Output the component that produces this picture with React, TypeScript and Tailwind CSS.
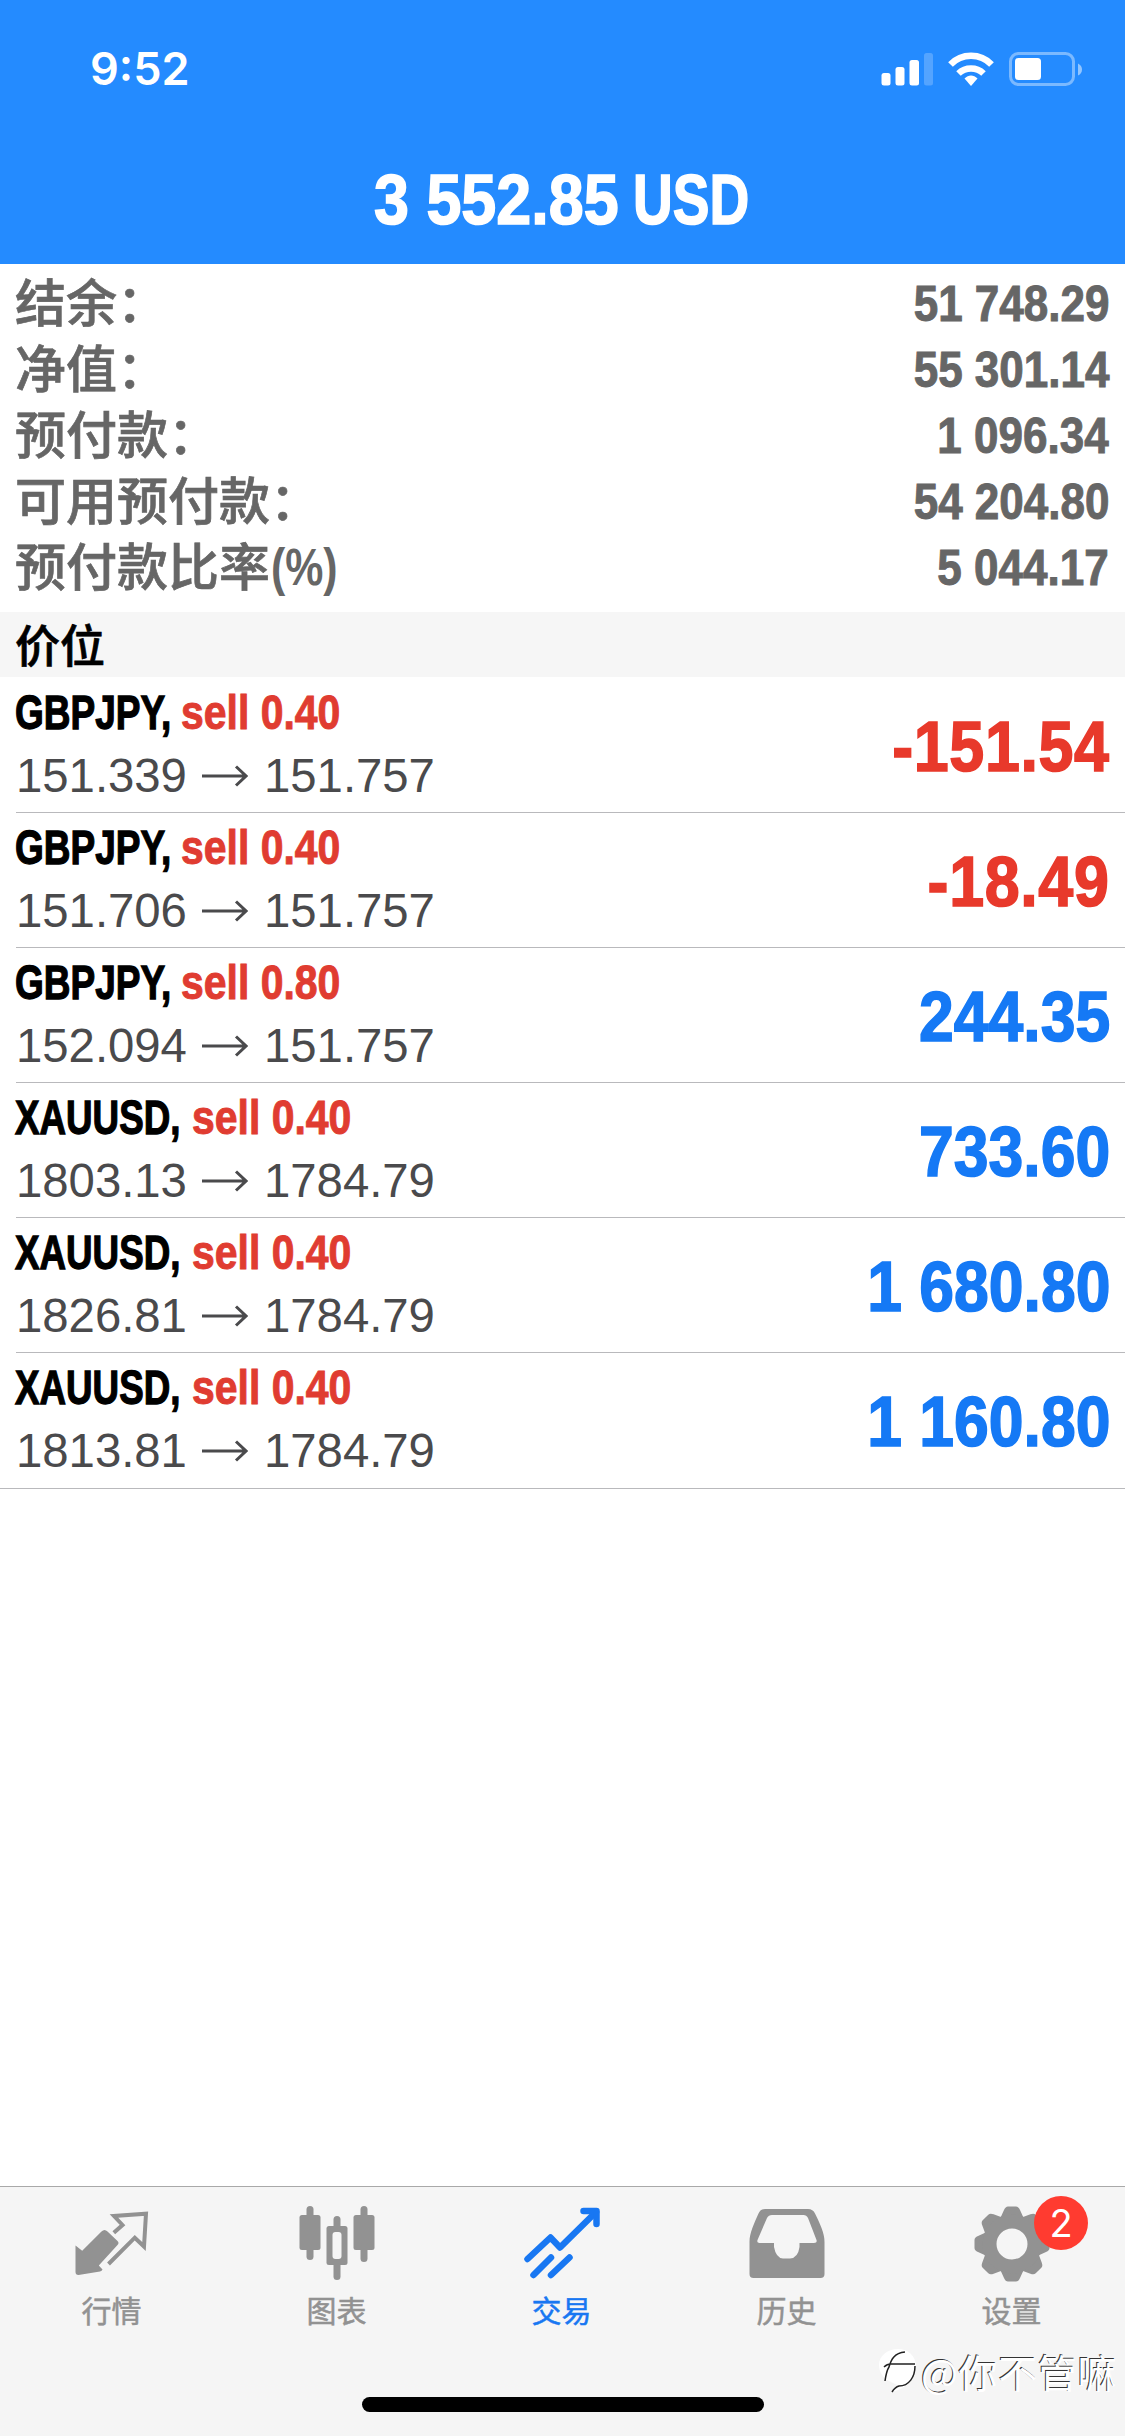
import type { ReactNode } from 'react';
import clsx from 'clsx';

type Position = {
  symbol: string;
  volume: string;
  open: string;
  current: string;
  profit: string;
};

const SUMMARY = [
  { label: '结余：', value: '51 748.29' },
  { label: '净值：', value: '55 301.14' },
  { label: '预付款：', value: '1 096.34' },
  { label: '可用预付款：', value: '54 204.80' },
  { label: '预付款比率', suffix: '(%)', value: '5 044.17' },
];

const POSITIONS: Position[] = [
  { symbol: 'GBPJPY', volume: '0.40', open: '151.339', current: '151.757', profit: '-151.54' },
  { symbol: 'GBPJPY', volume: '0.40', open: '151.706', current: '151.757', profit: '-18.49' },
  { symbol: 'GBPJPY', volume: '0.80', open: '152.094', current: '151.757', profit: '244.35' },
  { symbol: 'XAUUSD', volume: '0.40', open: '1803.13', current: '1784.79', profit: '733.60' },
  { symbol: 'XAUUSD', volume: '0.40', open: '1826.81', current: '1784.79', profit: '1 680.80' },
  { symbol: 'XAUUSD', volume: '0.40', open: '1813.81', current: '1784.79', profit: '1 160.80' },
];

function StatusIcons() {
  return (
    <svg width="204" height="40" viewBox="880 49 204 40" fill="#fff">
      <rect x="881.5" y="73" width="9" height="12.5" rx="2.5" />
      <rect x="895.5" y="67" width="9" height="18.5" rx="2.5" />
      <rect x="909.5" y="60" width="9.5" height="25.5" rx="2.5" />
      <rect x="924" y="53" width="9" height="32.5" rx="2.5" opacity=".22" />
      <g fill="none" stroke="#fff" strokeWidth="6.5">
        <path d="M950.5 64.5a28.500 28.500 0 0 1 41 0" />
        <path d="M958.5 73.500a18 18 0 0 1 25 0" />
      </g>
      <path d="M971 86l-6.500-7.500c4-4 9-4 13 0z" />
      <rect x="1010.5" y="53.5" width="63" height="31" rx="8" fill="none" stroke="#fff" strokeWidth="3" opacity=".4" />
      <rect x="1015" y="58" width="26" height="22" rx="3.5" />
      <path d="M1078 63.500q4 2 4 6t-4 6z" opacity=".5" />
    </svg>
  );
}

function QuotesIcon() {
  return (
    <svg width="76" height="76" viewBox="0 0 76 76">
      <path
        d="M1.500 39.500L8.200 44.700L27.500 25.500Q30.500 22.500 33.500 25.500L43.500 35Q45.500 37 43.500 39L24.800 59.500L28.500 63.500Q28 65 26 65.500L4.500 69Q1.500 69 1.500 66z"
        fill="#929292"
      />
      <path d="M39.800 26.700L48.500 19L40 10L72 7.700L70 40.500L60.800 31.700L34.500 58" fill="none" stroke="#929292" strokeWidth="4" />
    </svg>
  );
}

function ChartIcon() {
  return (
    <svg width="76" height="76" viewBox="0 0 76 76" fill="#929292">
      <rect x="7.5" y="0" width="7" height="54" rx="3.5" />
      <rect x="0.5" y="9" width="21" height="35" rx="2.5" />
      <rect x="34.5" y="10" width="7" height="64" rx="3.5" />
      <rect x="27.5" y="20" width="21" height="39" rx="2.5" />
      <rect x="33.5" y="26" width="9" height="27" rx="3" fill="#f5f5f5" />
      <rect x="61.5" y="0" width="7" height="56" rx="3.5" />
      <rect x="54.5" y="9" width="21" height="35" rx="2.5" />
    </svg>
  );
}

function TradeIcon() {
  return (
    <svg width="76" height="76" viewBox="0 0 76 76" fill="none" stroke="#1877f2" strokeWidth="6.5" strokeLinecap="round" strokeLinejoin="round">
      <path d="M3.500 53L26.500 31.500L36 41.500L72 6" />
      <path d="M59.500 5H72.500V18" />
      <path d="M9.500 69L27 51.500M27 69L45.500 51.500" />
    </svg>
  );
}

function HistoryIcon() {
  return (
    <svg width="76" height="76" viewBox="0 0 76 76">
      <path
        fillRule="evenodd"
        fill="#929292"
        d="M16 3H59Q64 3 66 7.500C71 18 75.500 27 75.500 36V68Q75.500 72 71.500 72H4.500Q.5 72 .5 68V36C.5 27 5 18 9.500 7.500Q11.500 3 16 3zM23 9Q19.500 9 18 12L8.500 34Q7.500 37 10.500 37H25V41Q27 52 34 52.500H41Q49 52 50.500 41V37H65Q68.500 37 67.500 34L59 12Q57.500 9 54.500 9z"
      />
    </svg>
  );
}

function SettingsIcon() {
  const teeth = [0, 45, 90, 135, 180, 225, 270, 315];
  return (
    <svg width="76" height="76" viewBox="0 0 76 76" fill="#929292">
      {teeth.map((angle) => (
        <path key={angle} d="M25 15L30 4Q31.500 .5 34 .5H42Q44.500 .5 46 4L51 15z" transform={`rotate(${angle} 38 38)`} />
      ))}
      <circle cx="38" cy="38" r="22.5" fill="none" stroke="#929292" strokeWidth="14" />
    </svg>
  );
}

const TABS: { label: string; icon: ReactNode; active?: boolean; badge?: string }[] = [
  { label: '行情', icon: <QuotesIcon /> },
  { label: '图表', icon: <ChartIcon /> },
  { label: '交易', icon: <TradeIcon />, active: true },
  { label: '历史', icon: <HistoryIcon /> },
  { label: '设置', icon: <SettingsIcon />, badge: '2' },
];

function PositionRow({ position, last }: { position: Position; last: boolean }) {
  const { symbol, volume, open, current, profit } = position;
  const gold = symbol === 'XAUUSD';
  const loss = profit.startsWith('-');
  return (
    <li className={clsx('flex border-b border-[#b9b9bc]', last ? 'h-[136px] pl-4' : 'ml-4 h-[135px]')}>
      <div className="flex-1 pt-[6px]">
        <div className="flex h-[56px] text-[49px] leading-[56px] font-bold whitespace-nowrap">
          <span className={clsx('-ml-px [-webkit-text-stroke:1.3px_currentColor]', gold ? 'w-[177px]' : 'w-[166px]')}>
            <span className={clsx('inline-block origin-left text-black', gold ? 'scale-x-[0.75]' : 'scale-x-[0.755]')}>{symbol},</span>
          </span>
          <span className="inline-block origin-left scale-x-[0.835] text-[#e03c31] [-webkit-text-stroke:1px_currentColor]">sell {volume}</span>
        </div>
        <div className="flex h-[71px] items-center text-[48px] leading-[71px] whitespace-nowrap text-[#4a4a4c]">
          <span className="w-[186px]">
            <span className="inline-block origin-left scale-x-[0.985]">{open}</span>
          </span>
          <svg width="46" height="22" viewBox="0 0 46 22" fill="none" stroke="#4a4a4c" strokeWidth="3">
            <path d="M0 11H44M34 1.500L44 11L34 20.500" />
          </svg>
          <span className="ml-[16px] inline-block origin-left scale-x-[0.985]">{current}</span>
        </div>
      </div>
      <div
        className={clsx(
          'origin-right pr-[17px] text-[71px] leading-[138px] font-bold whitespace-nowrap [-webkit-text-stroke:1.6px_currentColor]',
          loss ? 'scale-x-[0.885] tracking-[0.7px] text-[#e8392b]' : 'scale-x-[0.88] text-[#1579f5]',
        )}
      >
        {profit}
      </div>
    </li>
  );
}

export default function App() {
  return (
    <div className="flex h-[2436px] w-[1125px] flex-col overflow-hidden bg-white font-['Liberation_Sans','Noto_Sans_CJK_SC',sans-serif]">
      {/* Status bar and floating profit */}
      <header className="h-[264px] bg-[#248bff] text-white">
        <div className="flex h-[138px] items-center justify-between pr-[41px] pl-[90px]">
          <span className="font-[Inter,sans-serif] text-[45px] font-semibold">9:52</span>
          <StatusIcons />
        </div>
        <h1 className="flex h-[126px] pl-[374px] text-[71px] leading-[123px] font-bold whitespace-nowrap [-webkit-text-stroke:1.6px_currentColor]">
          <span className="w-[259px]">
            <span className="inline-block origin-left scale-x-[0.885]">3 552.85</span>
          </span>
          <span className="inline-block origin-left scale-x-[0.775]">USD</span>
        </h1>
      </header>

      {/* Account summary */}
      <section className="h-[348px] pt-[5px] text-[#666]">
        {SUMMARY.map((row) => (
          <div key={row.label} className="flex h-[66px] justify-between pr-[16px] pl-[15px] font-bold whitespace-nowrap">
            <span className="flex text-[51px]">
              <span className="font-['Noto_Sans_CJK_SC',sans-serif] leading-[63px] font-medium [-webkit-text-stroke:0.7px_currentColor]">{row.label}</span>
              {row.suffix && <span className="ml-px inline-block origin-left scale-x-[0.84] leading-[70px]">{row.suffix}</span>}
            </span>
            <span className="origin-right scale-x-[0.88] text-[50px] leading-[70px] [-webkit-text-stroke:1px_currentColor]">{row.value}</span>
          </div>
        ))}
      </section>

      <h2 className="mb-px h-[65px] bg-[#f6f6f6] pl-[15px] font-['Noto_Sans_CJK_SC',sans-serif] text-[45px] leading-[63px] font-medium text-black [-webkit-text-stroke:0.7px_currentColor]">
        价位
      </h2>

      {/* Open positions */}
      <ul>
        {POSITIONS.map((position, i) => (
          <PositionRow key={i} position={position} last={i === POSITIONS.length - 1} />
        ))}
      </ul>

      {/* Tab bar */}
      <footer className="mt-auto h-[250px] border-t border-[#a9a9a9] bg-[#f5f5f5]">
        <nav className="grid grid-cols-5">
          {TABS.map((tab) => (
            <button key={tab.label} className="relative flex h-[148px] flex-col items-center pt-[19px] pr-[2px]">
              {tab.icon}
              <span
                className={clsx(
                  "mt-[5px] font-['Noto_Sans_CJK_SC',sans-serif] text-[30px] leading-[44px] [-webkit-text-stroke:0.5px_currentColor]",
                  tab.active ? 'text-[#1877f2]' : 'text-[#929292]',
                )}
              >
                {tab.label}
              </span>
              {tab.badge && (
                <span className="absolute top-[9px] right-[37px] size-[54px] rounded-full bg-[#ff3b30] text-center font-[Inter,sans-serif] text-[38px] leading-[54px] text-white">
                  {tab.badge}
                </span>
              )}
            </button>
          ))}
        </nav>
        <div className="mt-[9px] flex h-[50px] items-center justify-end gap-[2px] pt-[3px] pr-[8px]">
          <svg width="41" height="46" viewBox="0 0 41 46" fill="none">
            <path d="M20 1C9 1 1 8 1 17c0 7 4 13 10 16l10 5-7 6c14-3 24-14 24-26C38 8 30 1 20 1z" fill="#fff" />
            <path d="M7 33C8 26 9 22 11 19C13 12 16 5 27 4M6 19Q9 16 13 16H37M37 18C37 29 31 38 21 38Q17 39 14 44" stroke="#222" strokeWidth="1.5" />
          </svg>
          <span className="font-['Noto_Sans_CJK_SC',sans-serif] text-[39px] leading-[50px] tracking-[0.6px] text-white [text-shadow:-1px_-1px_0_#333]">@你不管嘛</span>
        </div>
        <div className="mx-auto mt-[3px] h-[15px] w-[402px] rounded-full bg-black" />
      </footer>
    </div>
  );
}
